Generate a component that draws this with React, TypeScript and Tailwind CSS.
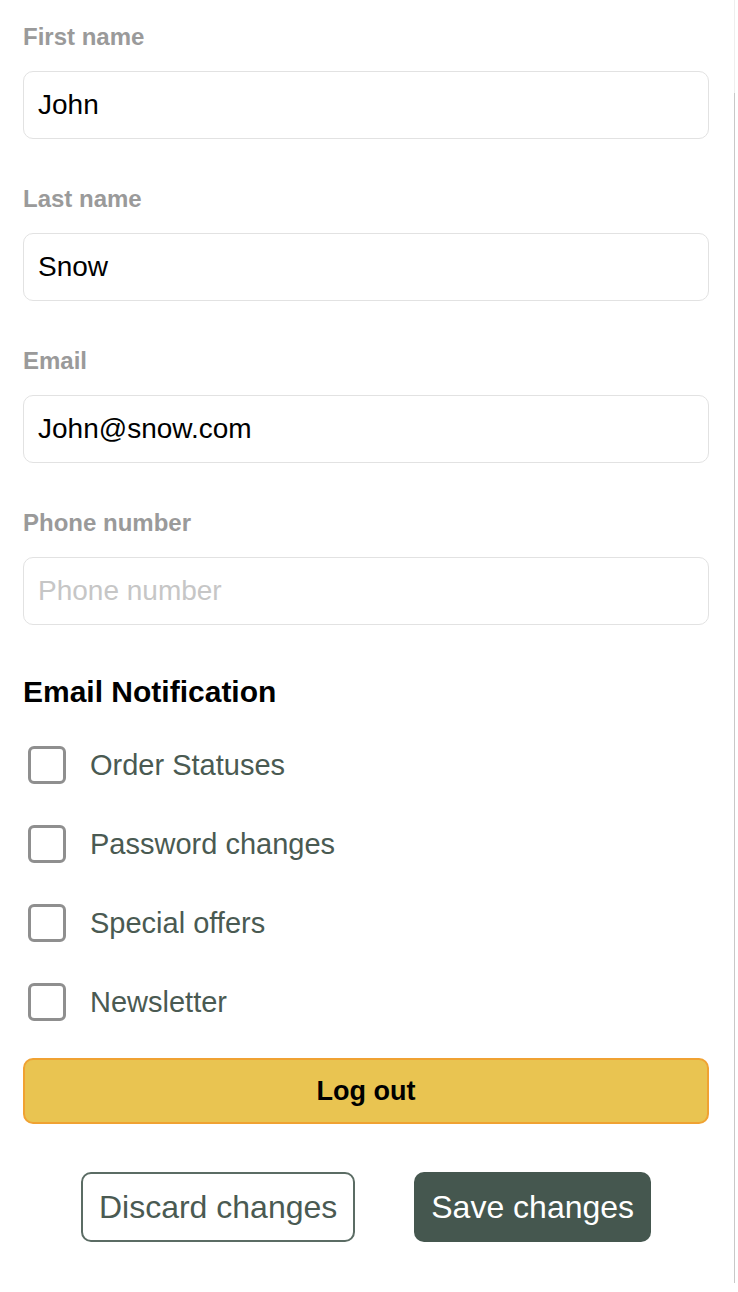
import { useState } from "react";

type Field = {
  label: string;
  value: string;
};

const fields: Field[] = [
  { label: "First name", value: "John" },
  { label: "Last name", value: "Snow" },
  { label: "Email", value: "John@snow.com" },
  { label: "Phone number", value: "" },
];

const notifications = [
  "Order Statuses",
  "Password changes",
  "Special offers",
  "Newsletter",
];

const App = () => {
  const [checked, setChecked] = useState<Record<string, boolean>>({});

  return (
    <div className="relative min-h-[1292px] w-[738px] bg-white font-['Liberation_Sans',Arial,sans-serif]">
      <div className="flex flex-col pl-[23px] pr-[29px] pt-[23px]">
        {fields.map((field) => (
          <div key={field.label} className="mb-[46px] flex flex-col">
            <label className="mb-[20px] text-[24px] font-bold leading-[28px] text-[#9a9a9a]">
              {field.label}
            </label>
            <input
              type="text"
              defaultValue={field.value}
              placeholder={field.label}
              className="h-[68px] w-full rounded-[10px] border border-[#e2e2e2] bg-white px-[14px] text-[28px] text-black outline-none placeholder:text-[#c6c6c6]"
            />
          </div>
        ))}

        {/* notifications */}
        <h2 className="mb-[16px] mt-[4px] text-[30px] font-bold leading-[34px] text-black">
          Email Notification
        </h2>
        <ul className="flex flex-col">
          {notifications.map((item) => (
            <li key={item} className="flex h-[79px] items-center">
              <button
                className="ml-[5px] flex h-[38px] w-[38px] items-center justify-center rounded-[6px] border-[3px] border-[#8f8f8f] bg-white"
                onClick={() => setChecked({ ...checked, [item]: !checked[item] })}
              >
                {checked[item] && (
                  <svg viewBox="0 0 24 24" className="h-6 w-6" fill="none" stroke="#45574f" strokeWidth={3}>
                    <path d="M5 12l5 5 9-10" />
                  </svg>
                )}
              </button>
              <span className="ml-[24px] text-[29px] leading-[34px] text-[#4a5a52]">
                {item}
              </span>
            </li>
          ))}
        </ul>

        <button className="mt-[17px] h-[66px] w-full rounded-[10px] border-2 border-[#f0a232] bg-[#e9c451] text-[27px] font-bold text-black">
          Log out
        </button>

        <div className="mt-[48px] flex justify-center gap-[59px]">
          <button className="h-[70px] rounded-[10px] border-2 border-[#5b6c64] bg-white px-[16px] text-[32px] text-[#4a5a52]">
            Discard changes
          </button>
          <button className="h-[70px] rounded-[10px] bg-[#45574f] px-[17px] text-[32px] text-white">
            Save changes
          </button>
        </div>
      </div>

      {/* scrollbar edge */}
      <div className="absolute left-[734px] top-0 h-[93px] w-px bg-[#eeeeee]" />
      <div className="absolute left-[734px] top-[93px] h-[1190px] w-px bg-[#c8c8c8]" />
    </div>
  );
};

export default App;
